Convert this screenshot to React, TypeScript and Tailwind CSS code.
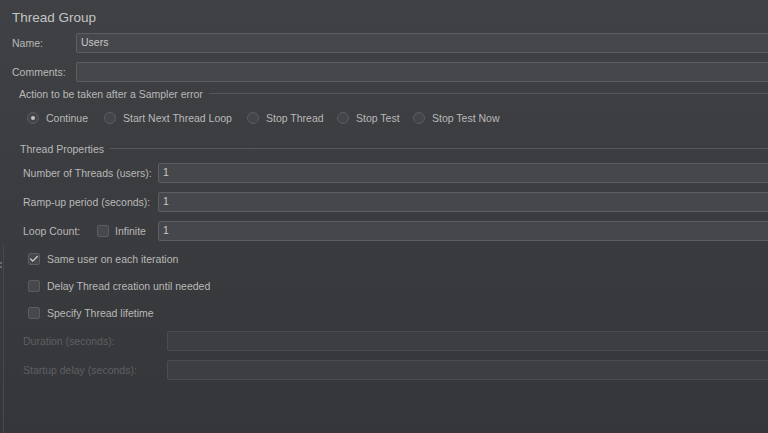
import { Check } from "lucide-react";

const LABEL = "text-[10.5px] leading-[14px] text-[#b9b9b9]";
const DIM = "text-[10.5px] leading-[14px] text-[#5d6063]";

function Field({ value = "", dim = false }: { value?: string; dim?: boolean }) {
  return (
    <div
      className={
        dim
          ? "-mr-[4px] flex h-[20px] flex-1 items-center rounded-[2px] border border-[#4a4d50] bg-[#3c3e41]"
          : "-mr-[4px] flex h-[20px] flex-1 items-center rounded-[2px] border border-[#5c5f62] bg-[#45474a] pl-[4px] text-[10.5px] text-[#c8c8c8]"
      }
    >
      {value}
    </div>
  );
}

function Radio({ label, on = false, w }: { label: string; on?: boolean; w: string }) {
  return (
    <div className={`flex items-center gap-[7px] ${w}`}>
      <span className="flex h-[12px] w-[12px] shrink-0 items-center justify-center rounded-full border border-[#5a5d60] bg-[#434548]">
        {on && <span className="h-[4px] w-[4px] rounded-full bg-[#c4c4c4]" />}
      </span>
      <span className={LABEL}>{label}</span>
    </div>
  );
}

function Box({ on = false }: { on?: boolean }) {
  return (
    <span className="flex h-[12px] w-[12px] shrink-0 items-center justify-center rounded-[2px] border border-[#5a5d60] bg-[#46484b]">
      {on && <Check className="h-[10px] w-[10px] text-[#d0d0d0]" strokeWidth={3} />}
    </span>
  );
}

function GroupTitle({ text, pad }: { text: string; pad: string }) {
  return (
    <div className={`flex h-[14px] items-center ${pad}`}>
      <span className={LABEL}>{text}</span>
      <span className="ml-[6px] -mt-px h-px flex-1 bg-[#55585b]" />
    </div>
  );
}

export default function App() {
  return (
    <div className="flex h-[433px] w-[768px] overflow-hidden bg-linear-to-b from-[#3f4144] to-[#343639] font-['Liberation_Sans',Arial,sans-serif]">
      <div className="flex w-[4px] shrink-0 flex-col">
        <div className="h-[244px]" />
        <div className="flex flex-1 flex-col items-start border-r border-[#46484b] pt-[18px]">
          <span className="h-[2px] w-[2px] bg-[#6a6d70]" />
          <span className="mt-[2px] h-[2px] w-[2px] bg-[#6a6d70]" />
        </div>
      </div>

      <div className="flex flex-1 flex-col">
        <div className="pl-[8px] pt-[9px] text-[13.5px] leading-[18px] text-[#c4c4c4]">Thread Group</div>

        <div className="mt-[6px] flex h-[20px] items-center">
          <span className={`w-[72px] pl-[8px] ${LABEL}`}>Name:</span>
          <Field value="Users" />
        </div>
        <div className="mt-[9px] flex h-[20px] items-center">
          <span className={`w-[72px] pl-[8px] ${LABEL}`}>Comments:</span>
          <Field />
        </div>

        <div className="mt-[5px]">
          <GroupTitle text="Action to be taken after a Sampler error" pad="pl-[15px]" />
        </div>
        <div className="mt-[9px] flex h-[16px] items-center pl-[23px]">
          <Radio label="Continue" on w="w-[77px]" />
          <Radio label="Start Next Thread Loop" w="w-[143px]" />
          <Radio label="Stop Thread" w="w-[90px]" />
          <Radio label="Stop Test" w="w-[76px]" />
          <Radio label="Stop Test Now" w="w-[100px]" />
        </div>

        <div className="mt-[16px]">
          <GroupTitle text="Thread Properties" pad="pl-[16px]" />
        </div>

        <div className="mt-[7px] flex h-[20px] items-center">
          <span className={`w-[154px] pl-[19px] ${LABEL}`}>Number of Threads (users):</span>
          <Field value="1" />
        </div>
        <div className="mt-[9px] flex h-[20px] items-center">
          <span className={`w-[154px] pl-[19px] ${LABEL}`}>Ramp-up period (seconds):</span>
          <Field value="1" />
        </div>
        <div className="mt-[9px] flex h-[20px] items-center">
          <div className="flex w-[154px] items-center pl-[19px]">
            <span className={`w-[74px] ${LABEL}`}>Loop Count:</span>
            <Box />
            <span className={`ml-[6px] ${LABEL}`}>Infinite</span>
          </div>
          <Field value="1" />
        </div>

        <div className="mt-[11px] flex h-[14px] items-center gap-[7px] pl-[24px]">
          <Box on />
          <span className={LABEL}>Same user on each iteration</span>
        </div>
        <div className="mt-[13px] flex h-[14px] items-center gap-[7px] pl-[24px]">
          <Box />
          <span className={LABEL}>Delay Thread creation until needed</span>
        </div>
        <div className="mt-[13px] flex h-[14px] items-center gap-[7px] pl-[24px]">
          <Box />
          <span className={LABEL}>Specify Thread lifetime</span>
        </div>

        <div className="mt-[11px] flex h-[20px] items-center">
          <span className={`w-[163px] pl-[19px] ${DIM}`}>Duration (seconds):</span>
          <Field dim />
        </div>
        <div className="mt-[9px] flex h-[20px] items-center">
          <span className={`w-[163px] pl-[19px] ${DIM}`}>Startup delay (seconds):</span>
          <Field dim />
        </div>
      </div>
    </div>
  );
}
